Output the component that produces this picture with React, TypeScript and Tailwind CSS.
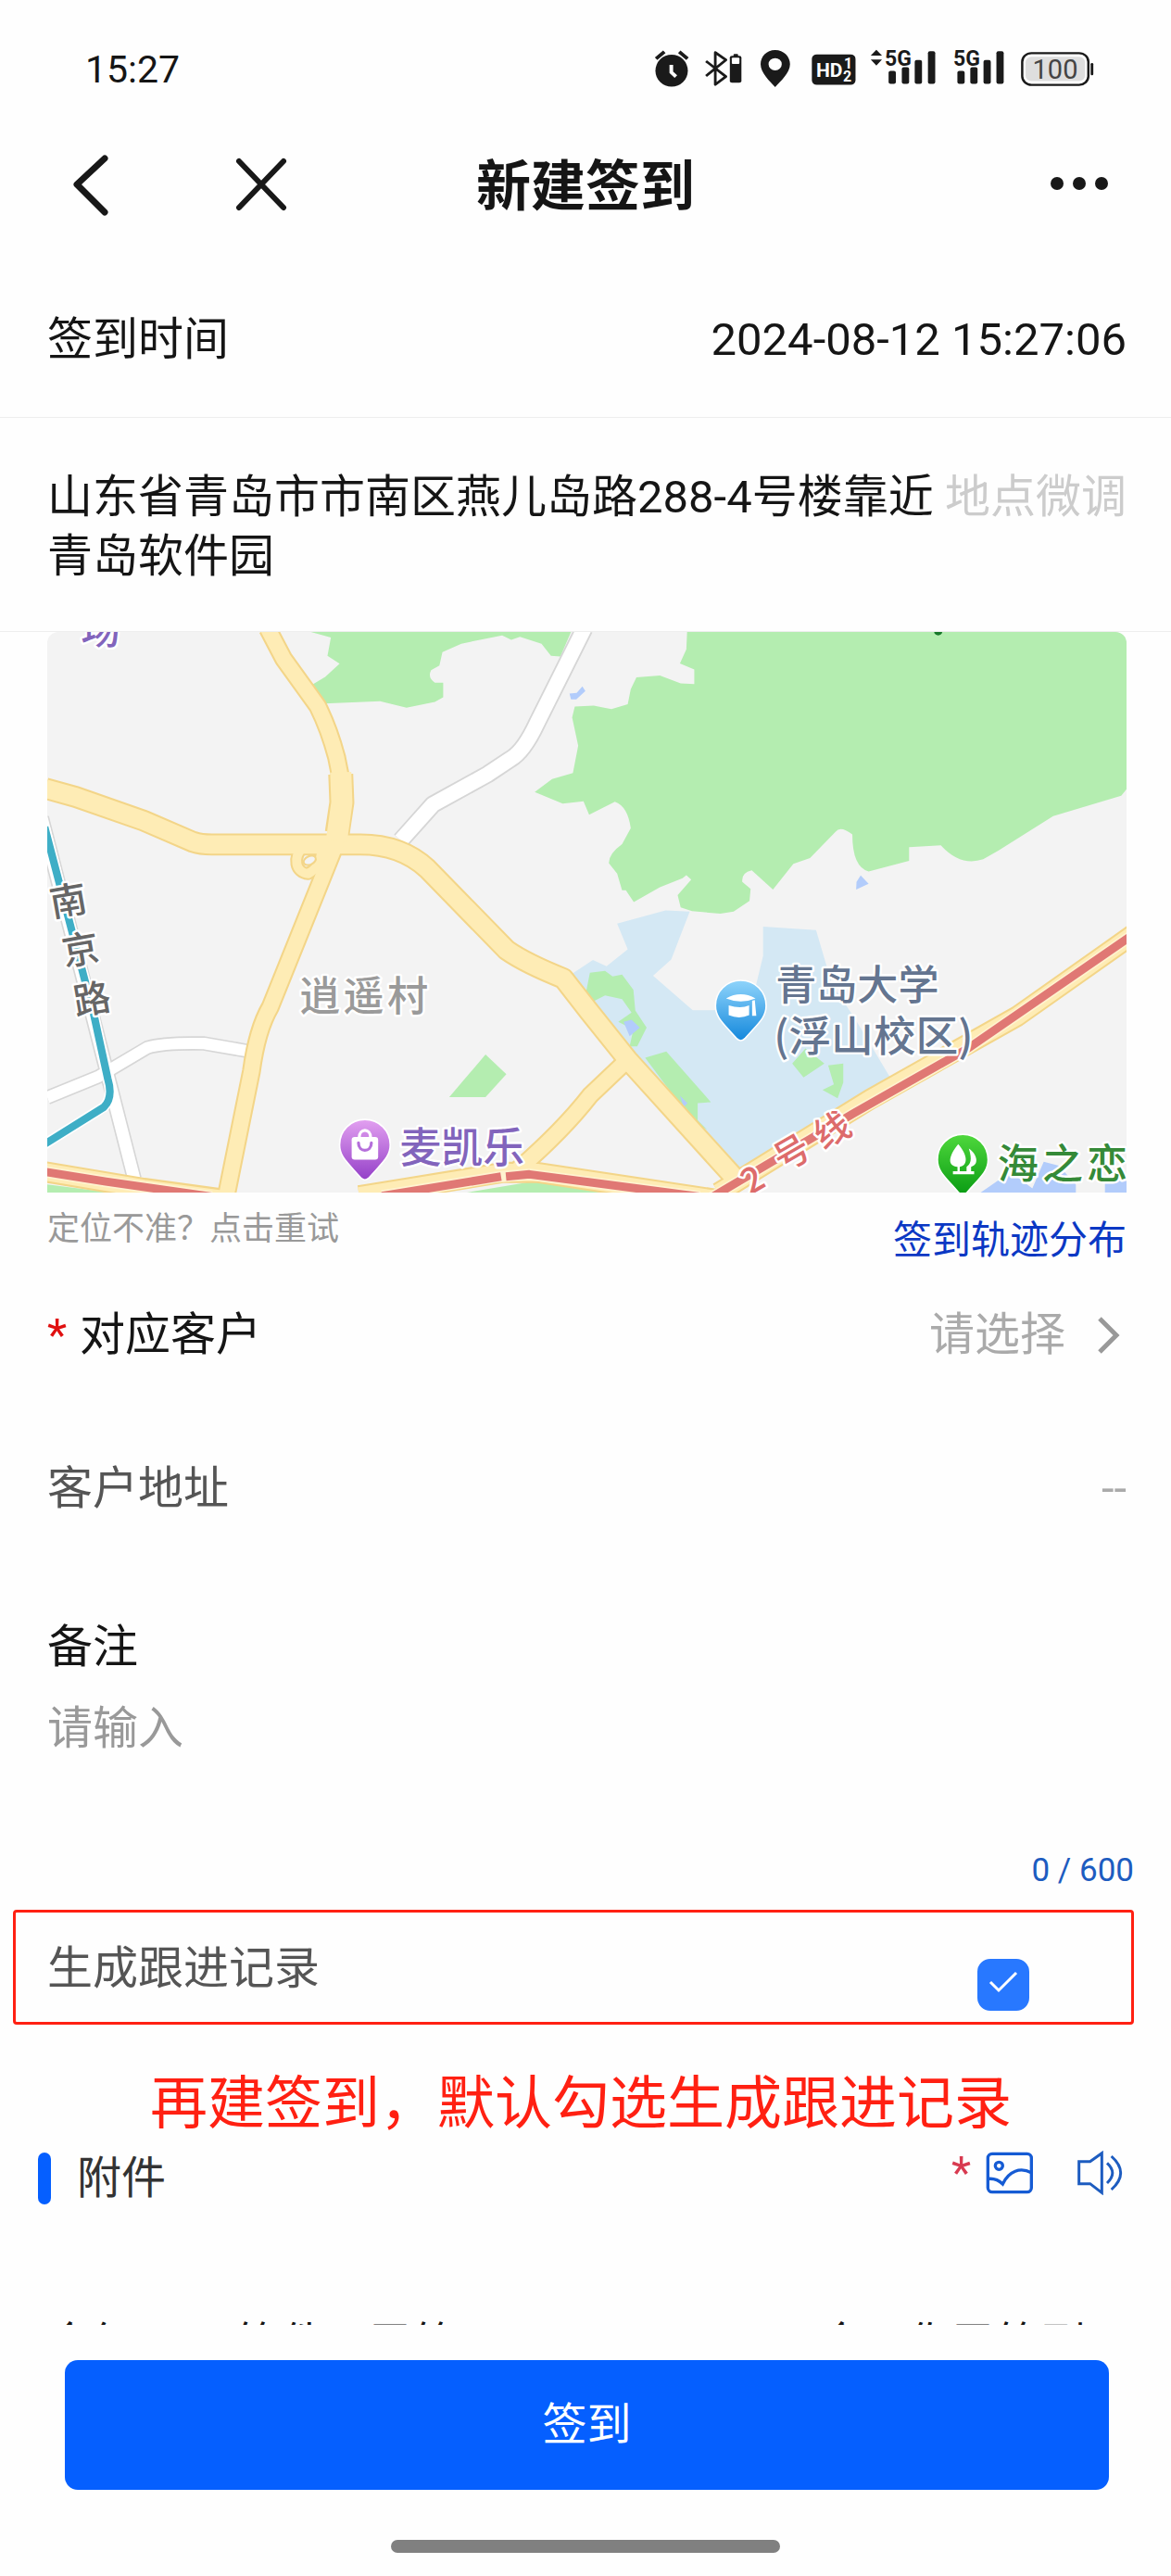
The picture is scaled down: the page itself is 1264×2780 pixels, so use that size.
import { useState } from 'react';

const REMARK_LIMIT = 600;

function StatusIcons() {
  return (
    <svg viewBox="0 0 560 90" className="h-[90px] w-[560px]" fill="#1a1a1a" aria-hidden="true">
      <g transform="scale(0.357 0.333)">
        {/* alarm */}
        <ellipse cx="182" cy="139" rx="49" ry="52" />
        <path d="M135 100 160 78M230 100 205 78" stroke="#1a1a1a" strokeWidth="11" />
        <path d="M181 120v24l14 14" stroke="#fff" strokeWidth="11" fill="none" />
        {/* bluetooth */}
        <path d="M286 108 346 158 314 184V80L346 104 286 156" stroke="#1a1a1a" strokeWidth="8" fill="none" strokeLinejoin="round" />
        <rect x="358" y="91" width="35" height="87" rx="6" />
        <rect x="369" y="85" width="14" height="8" rx="3" />
        <rect x="364" y="97" width="23" height="20" rx="3" fill="#fff" />
        {/* location */}
        <path fillRule="evenodd" d="M495 72c-26 0-44 21-44 46 0 28 28 56 44 74 16-18 45-46 45-74 0-25-19-46-45-46Zm0 26a20 20 0 1 1 0 40 20 20 0 0 1 0-40Z" />
        {/* HD */}
        <rect x="606" y="86" width="132" height="99" rx="15" />
        {/* signal 1 */}
        <path d="M784 90 801 71 818 90ZM784 103 801 122 818 103Z" />
        <rect x="838" y="140" width="22" height="42" rx="6" />
        <rect x="878" y="128" width="22" height="54" rx="6" />
        <rect x="917" y="104" width="22" height="78" rx="6" />
        <rect x="957" y="76" width="22" height="106" rx="6" />
        {/* signal 2 */}
        <rect x="1046" y="140" width="22" height="42" rx="6" />
        <rect x="1085" y="128" width="22" height="54" rx="6" />
        <rect x="1125" y="104" width="22" height="78" rx="6" />
        <rect x="1164" y="76" width="22" height="106" rx="6" />
        {/* battery */}
        <rect x="1242" y="82" width="200" height="103" rx="28" fill="#fff" stroke="#1a1a1a" strokeWidth="7" />
        <rect x="1252" y="94" width="180" height="79" rx="18" fill="#dedede" />
        <rect x="1449" y="114" width="8" height="40" rx="4" />
      </g>
      <g fontWeight="700" className="font-[Roboto]">
        <text x="221" y="53" fontSize="21" fill="#fff">HD</text>
        <text x="251" y="44" fontSize="16" fill="#fff">1</text>
        <text x="250" y="58" fontSize="16" fill="#fff">2</text>
        <text x="295" y="41" fontSize="23" stroke="#fefefe" strokeWidth="2" className="[paint-order:stroke]">5G</text>
        <text x="369" y="41" fontSize="23" stroke="#fefefe" strokeWidth="2" className="[paint-order:stroke]">5G</text>
      </g>
      <text x="479" y="55" textAnchor="middle" fontSize="29" fill="#444" className="font-[Roboto]">100</text>
    </svg>
  );
}

function MapView() {
  return (
    <svg
      viewBox="125 29 2854 1483"
      className="block w-full rounded-t-xl bg-[#f3f3f3] font-['Noto_Sans_CJK_SC',sans-serif]"
      role="img"
      aria-label="地图"
    >
      <defs>
        <linearGradient id="purplePin" x1="0" y1="0" x2="0" y2="1">
          <stop offset="0" stopColor="#e2a0f0" />
          <stop offset="1" stopColor="#9440c8" />
        </linearGradient>
        <linearGradient id="bluePin" x1="0" y1="0" x2="0" y2="1">
          <stop offset="0" stopColor="#8fd4fb" />
          <stop offset="1" stopColor="#1488dc" />
        </linearGradient>
        <linearGradient id="greenPin" x1="0" y1="0" x2="0" y2="1">
          <stop offset="0" stopColor="#4fd83c" />
          <stop offset="1" stopColor="#0a9c14" />
        </linearGradient>
      </defs>

      {/* green areas */}
      <g fill="#b4edb0">
        <path d="M822 29 875 44 866 92 898 113 860 148 820 172 858 218 1005 212 1075 229 1150 214 1172 202V163H1150Q1130 150 1140 130L1162 118 1170 82 1220 60 1328 38 1352 50 1375 42 1432 60 1457 92 1482 94 1510 29Z" />
        <path d="M1817 29 1815 75 1798 112 1836 128V167L1800 165 1745 144 1683 149 1668 180 1660 220 1617 233 1570 224 1520 226 1513 255 1529 330 1515 402 1460 418 1414 452 1488 483 1543 477 1558 512 1626 478Q1660 490 1668 548L1645 590Q1610 615 1610 640L1632 668 1645 712H1655L1676 743 1745 704 1805 680 1815 672 1828 684 1792 725 1800 757 1830 767 1905 774 1940 768 1982 740 1985 708 1963 690Q1960 665 1988 659L2044 710 2098 642 2142 627 2210 557Q2222 540 2254 564 2254 650 2297 662L2404 634V598L2488 593Q2540 650 2600 630L2640 607 2785 516 2965 462 2979 445V29Z" />
        <path d="M1284 1146 1339 1198 1284 1259H1188Z" />
        <path d="M125 1490 300 1512H125ZM1230 1512 1420 1480 1760 1512Z" />
      </g>

      {/* university */}
      <path fill="#d4e8f4" d="M1505 938 1568 896 1604 913 1660 868 1632 800 1760 765 1824 768 1775 895 1727 938 1832 1029H1893L2000 960 2018 885V808L2158 817 2200 960 2260 1050 2362 1220 1950 1450 1850 1340 1560 1020Z" />
      <g fill="#b4edb0">
        <path d="M1560 930 1600 925 1620 940 1645 935 1675 975 1680 1030 1710 1075 1685 1125H1665L1675 1080 1635 1060 1670 1035 1645 1000 1600 990 1570 1005 1550 980Z" />
        <path d="M1706 1155 1762 1138 1880 1272 1845 1275V1320L1870 1345 1830 1320Z" />
        <path d="M2095 1170 2130 1130 2180 1170 2125 1207ZM2190 1175 2230 1170 2230 1220 2215 1262 2175 1240 2205 1225Z" />
      </g>
      <path fill="#b2ccfb" d="M1649 1060 1670 1054 1692 1075 1665 1098ZM1798 1255 1818 1275 1808 1285ZM2265 690 2276 673 2297 695 2264 710ZM1506 192 1525 190 1540 173 1548 185 1524 207H1510ZM2592 1512 2660 1465 2690 1470 2730 1500 2760 1430 2800 1440 2845 1490V1512ZM2922 1512V1480H2979V1512Z" />
      <circle cx="2481" cy="27" r="11" fill="#18792a" />

      {/* minor roads */}
      <g fill="none" strokeLinejoin="round">
        <g stroke="#d6d6d6" strokeWidth="48">
          <path d="M1545 20 1420 270Q1385 345 1350 365L1290 405 1145 485 1060 580" />
          <path d="M125 1260 260 1205 390 1128Q430 1115 540 1117L655 1137" strokeWidth="38" />
          <path d="M110 520 195 850 355 1475" strokeWidth="40" />
        </g>
        <g stroke="#fff" strokeWidth="39">
          <path d="M1545 20 1420 270Q1385 345 1350 365L1290 405 1145 485 1060 580" />
          <path d="M110 520 195 850 355 1475" strokeWidth="32" />
          <path d="M125 1260 260 1205 390 1128Q430 1115 540 1117L655 1137" strokeWidth="30" />
        </g>
      </g>

      {/* main roads */}
      <g fill="none" strokeLinejoin="round">
        <g stroke="#f3d588">
          <path d="M120 443 200 465 380 528 510 584Q530 591 560 591H950Q1060 590 1130 655L1340 870Q1390 905 1490 945L1560 1035 1660 1160 1950 1480" strokeWidth="58" />
          <path d="M708 20 750 100 840 225Q870 285 890 360L902 420V490L888 590 715 1020Q680 1080 665 1190L600 1512" strokeWidth="50" />
          <path d="M901 405 904 480 892 560" strokeWidth="66" />
          <path d="M800 600C775 625 780 665 815 668 840 655 850 630 850 605" strokeWidth="34" />
          <path d="M1660 1160 1560 1255Q1490 1345 1370 1450" strokeWidth="50" />
          <path d="M110 1455 380 1500 600 1530M950 1520 1330 1458H1420L1900 1530M1900 1512 2300 1265 2690 1045 2995 830" strokeWidth="56" />
        </g>
        <g stroke="#feecb5">
          <path d="M120 443 200 465 380 528 510 584Q530 591 560 591H950Q1060 590 1130 655L1340 870Q1390 905 1490 945L1560 1035 1660 1160 1950 1480" strokeWidth="48" />
          <path d="M708 20 750 100 840 225Q870 285 890 360L902 420V490L888 590 715 1020Q680 1080 665 1190L600 1512" strokeWidth="40" />
          <path d="M901 400 904 480 890 580" strokeWidth="56" />
          <path d="M800 600C775 625 780 665 815 668 840 655 850 630 850 605" strokeWidth="24" />
          <path d="M1660 1160 1560 1255Q1490 1345 1370 1450" strokeWidth="40" />
          <path d="M110 1455 380 1500 600 1530M950 1520 1330 1458H1420L1900 1530M1900 1512 2300 1265 2690 1045 2995 830" strokeWidth="46" />
        </g>
      </g>
      <ellipse cx="819" cy="633" rx="17" ry="11" transform="rotate(-25 819 633)" fill="#f3f3f3" stroke="#f3d588" strokeWidth="5" />

      {/* metro lines */}
      <g fill="none" strokeLinejoin="round">
        <path d="M118 545 248 1040 285 1210Q300 1260 275 1285L115 1385" stroke="#fff" strokeWidth="28" />
        <path d="M110 1455 280 1482 560 1522M1010 1520 1320 1469 1400 1463 1850 1522M1880 1525 2260 1300 2560 1130 2995 830" stroke="#fff3d0" strokeWidth="30" />
        <path d="M118 545 248 1040 285 1210Q300 1260 275 1285L115 1385" stroke="#3eaec6" strokeWidth="20" />
        <path d="M110 1455 280 1482 560 1522M1010 1520 1325 1469M1338 1469 1400 1463 1850 1522M1880 1525 2260 1300 2560 1130 2995 830" stroke="#e07874" strokeWidth="22" />
      </g>

      {/* labels */}
      <g stroke="#fff" strokeWidth="12" strokeLinejoin="round" fontSize="108" fontWeight="500" className="[paint-order:stroke]">
        <g fill="#666" fontSize="98">
          <text transform="translate(180 738) rotate(-10)" x="-49" y="37">南</text>
          <text transform="translate(213 867) rotate(-10)" x="-49" y="37">京</text>
          <text transform="translate(243 998) rotate(-10)" x="-49" y="37">路</text>
        </g>
        <g fill="#9a9a9a">
          <text x="792" y="1032">逍</text>
          <text x="908" y="1032">遥</text>
          <text x="1024" y="1032">村</text>
        </g>
        <text x="214" y="60" fill="#8264bc" fontSize="104">场</text>
        <text x="1057" y="1434" fill="#8264bc" fontSize="110">麦凯乐</text>
        <g fill="#647590">
          <text x="2051" y="1002">青岛大学</text>
          <text x="2046" y="1138" fontSize="112">(浮山校区)</text>
        </g>
        <g fill="#dd6b6b" fontSize="94">
          <text transform="translate(1989 1475) rotate(-30)" x="-27" y="35">2</text>
          <text transform="translate(2093 1405) rotate(-30)" x="-47" y="35">号</text>
          <text transform="translate(2200 1345) rotate(-30)" x="-47" y="35">线</text>
        </g>
        <g fill="#358a38">
          <text x="2638" y="1474">海</text>
          <text x="2756" y="1474">之</text>
          <text x="2874" y="1474">恋</text>
        </g>
      </g>

      {/* pins */}
      <g transform="translate(965 1318)">
        <path d="M0 0C-38 0-67 30-67 67-67 98-48 112-12 153Q0 166 12 153C48 112 67 98 67 67 67 30 38 0 0 0Z" fill="url(#purplePin)" stroke="#fff" strokeWidth="4" />
        <rect x="-35" y="46" width="70" height="60" rx="8" fill="#fff" />
        <path d="M-15 48C-15 22 15 22 15 48" fill="none" stroke="#fff" strokeWidth="8" />
        <path d="M-17 62C-17 88 17 88 17 62" fill="none" stroke="#b56fdb" strokeWidth="8" strokeLinecap="round" />
      </g>
      <g transform="translate(1959 950)">
        <path d="M0 0C-38 0-67 30-67 67-67 98-48 112-12 153Q0 166 12 153C48 112 67 98 67 67 67 30 38 0 0 0Z" fill="url(#bluePin)" stroke="#fff" strokeWidth="4" />
        <path d="M-39 48Q0 26 39 48 0 64-39 48ZM-32 66Q0 76 22 66V92Q-4 104-32 92ZM30 54 37 52 41 94H30Z" fill="#fff" />
      </g>
      <g transform="translate(2546 1357)">
        <path d="M0 0C-38 0-67 30-67 67-67 98-48 112-12 153Q0 166 12 153C48 112 67 98 67 67 67 30 38 0 0 0Z" fill="url(#greenPin)" stroke="#fff" strokeWidth="4" />
        <path d="M-12 26C-40 60-40 84-14 86V98H-26V106H30V98H22V86C46 80 36 50 16 38 26 68 20 80 10 86V98H-8V86C14 82 14 56-12 26Z" fill="#fff" />
      </g>
    </svg>
  );
}

export default function App() {
  const [remark, setRemark] = useState('');
  const [followUp, setFollowUp] = useState(true);

  return (
    <div className="min-h-screen bg-[#fefefe] font-[Roboto,'Noto_Sans_CJK_SC',sans-serif] text-[49px] leading-[64px] text-[#151515]">
      <div className="flex h-[149px] items-center justify-between pr-11 pl-[92px]">
        <span className="text-[41px]">15:27</span>
        <StatusIcons />
      </div>

      <header className="mb-8 grid h-[102px] grid-cols-3 items-center px-[68px]">
        <div className="flex items-center gap-[118px]">
          <button type="button" aria-label="返回">
            <svg viewBox="0 0 60 72" className="h-[72px] w-[60px]" fill="none" stroke="#181818" strokeWidth="7" strokeLinecap="round" strokeLinejoin="round">
              <path d="M45 7 15 35 45 65" />
            </svg>
          </button>
          <button type="button" aria-label="关闭">
            <svg viewBox="0 0 72 72" className="size-[72px]" fill="none" stroke="#181818" strokeWidth="6" strokeLinecap="round">
              <path d="M12 10 60 60M60 10 12 60" />
            </svg>
          </button>
        </div>
        <h1 className="pt-1 text-center text-[59px] font-bold">新建签到</h1>
        <button type="button" aria-label="更多" className="justify-self-end">
          <svg viewBox="0 0 64 32" className="h-8 w-16" fill="#181818">
            <circle cx="9" cy="14" r="7" />
            <circle cx="33" cy="14" r="7" />
            <circle cx="57" cy="14" r="7" />
          </svg>
        </button>
      </header>

      <main>
        <div className="flex h-[168px] items-center justify-between border-b border-[#eeeeee] pr-12 pl-[51px]">
          <span>签到时间</span>
          <time>2024-08-12 15:27:06</time>
        </div>

        <div className="flex justify-between gap-2 border-b border-[#eeeeee] pt-[54px] pr-12 pb-12 pl-[51px]">
          <p className="flex-1">山东省青岛市市南区燕儿岛路288-4号楼靠近青岛软件园</p>
          <button type="button" className="shrink-0 self-start text-[#cccccc]">地点微调</button>
        </div>

        <section className="pr-12 pl-[51px]">
          <MapView />
          <div className="flex h-[88px] items-start justify-between">
            <button type="button" className="mt-[18px] text-[35px] leading-[44px] text-[#999999]">定位不准？点击重试</button>
            <a href="#track" className="mt-[26px] text-[42px] leading-[52px] text-[#0b38c4]">签到轨迹分布</a>
          </div>
        </section>

        <div className="flex h-[132px] items-center justify-between pr-[50px] pl-[51px]">
          <span id="customer" className="flex gap-[14px]">
            <span className="text-[#e01010]">*</span>
            <span>对应客户</span>
          </span>
          <button type="button" aria-labelledby="customer" className="flex items-center gap-8 text-[#aaaaaa]">
            请选择
            <svg viewBox="0 0 32 44" className="h-11 w-8" fill="none" stroke="#999999" strokeWidth="5">
              <path d="M5 4 23 22 5 40" />
            </svg>
          </button>
        </div>

        <div className="flex h-[200px] items-center justify-between pr-12 pl-[51px] text-[#555555]">
          <span>客户地址</span>
          <span className="text-[#aaaaaa]">--</span>
        </div>

        <div className="flex flex-col pt-[39px] pr-12 pl-[51px]">
          <label htmlFor="remark">备注</label>
          <textarea
            id="remark"
            value={remark}
            maxLength={REMARK_LIMIT}
            onChange={(e) => setRemark(e.target.value)}
            placeholder="请输入"
            className="mt-6 h-[163px] w-full resize-none outline-none placeholder:text-[#999999]"
          />
        </div>
        <div className="pr-10 text-right text-[35px] leading-[44px] text-[#1d5cc0]">
          {remark.length} / {REMARK_LIMIT}
        </div>

        <div className="mt-5 mr-10 ml-[14px] flex h-[124px] justify-between rounded-sm border-3 border-[#ff2012] pr-[110px] pl-[34px]">
          <label htmlFor="followUp" className="self-center pt-1 text-[#555555]">生成跟进记录</label>
          <span className="relative mb-3 size-14 self-end">
            <input
              id="followUp"
              type="checkbox"
              checked={followUp}
              onChange={(e) => setFollowUp(e.target.checked)}
              className="block size-14 appearance-none rounded-[14px] border-2 border-[#2878ff] checked:bg-[#2878ff]"
            />
            <svg viewBox="0 0 56 56" className="pointer-events-none absolute inset-0 size-14" fill="none" stroke="#fff" strokeWidth="3">
              <path d="M14 25 23 34 42 15" />
            </svg>
          </span>
        </div>

        <p className="mt-[50px] pr-[10px] text-center text-[62px] leading-[72px] text-[#ff2012]">再建签到，默认勾选生成跟进记录</p>

        <div className="mt-4 flex h-14 items-center pr-[50px] pl-[41px]">
          <span className="mr-7 h-14 w-[14px] rounded-full bg-[#055fff]" />
          <h2 className="flex-1 text-[48px] text-[#333333]">附件</h2>
          <div className="flex h-11 items-center self-start">
            <span className="mr-4 text-[#d83a50]">*</span>
            <button type="button" aria-label="添加图片" className="mr-[46px]">
              <svg viewBox="0 0 156 138" className="h-[46px] w-[52px]" fill="none" stroke="#155bd4" strokeWidth="10">
                <rect x="7" y="7" width="141" height="124" rx="14" />
                <circle cx="43" cy="46" r="12" />
                <path d="M8 88C28 86 40 90 55 105 75 62 112 50 148 68" />
              </svg>
            </button>
            <button type="button" aria-label="添加录音">
              <svg viewBox="0 0 156 144" className="h-12 w-[52px]" fill="none" stroke="#1d5cc0" strokeWidth="9">
                <path d="M8 35H44L82 8V136L44 107H8Z" />
                <path d="M99 40Q134 72 99 105M113 18Q173 72 113 126" />
              </svg>
            </button>
          </div>
        </div>

        {/* cut off by the submit bar */}
        <div className="mt-[116px] flex h-[14px] justify-between overflow-hidden pr-[92px] pl-[51px] text-[48px] leading-[70px] whitespace-pre">
          <span>今红　　 签件　已签</span>
          <span>今日你已签到</span>
        </div>
      </main>

      <footer className="pt-[38px] pb-6">
        <div className="pr-[67px] pl-[70px]">
          <button type="submit" className="h-[140px] w-full rounded-[14px] bg-[#055fff] text-[48px] text-white">签到</button>
        </div>
        <div className="mx-auto mt-[54px] h-[14px] w-[420px] rounded-full bg-[#808080]" />
      </footer>
    </div>
  );
}
